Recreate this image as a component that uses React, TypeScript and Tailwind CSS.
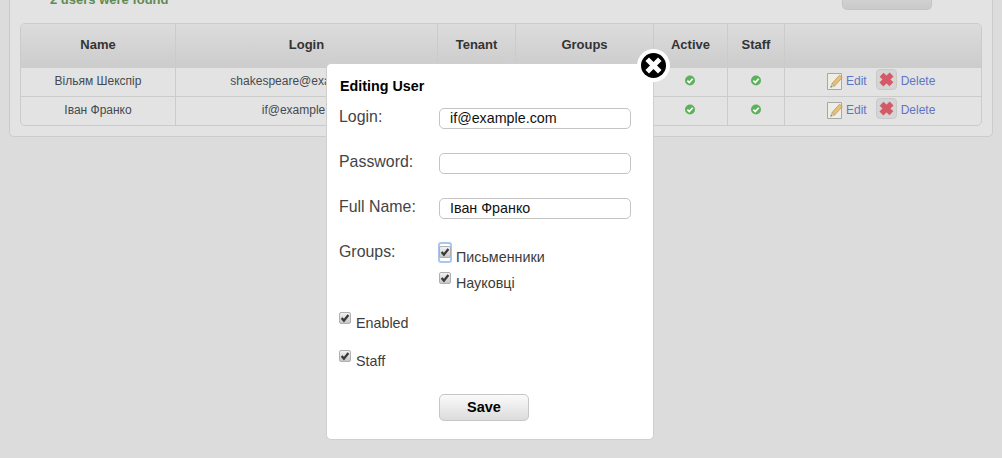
import React from "react";

const font = { fontFamily: '"Liberation Sans", Arial, sans-serif' };

function Check() {
  return (
    <span className="relative inline-flex h-[12px] w-[12px] shrink-0 items-center justify-center rounded-[2px] border border-[#b0b0b0] bg-gradient-to-b from-[#f2f2f2] to-[#c8c8c8]">
      <svg width="10" height="10" viewBox="0 0 10 10">
        <path d="M1.6 5 L3.9 7.6 L8.4 2" fill="none" stroke="#3a3a3a" strokeWidth="2.3" />
      </svg>
    </span>
  );
}

function Ok() {
  return (
    <svg width="11" height="11" viewBox="0 0 11 11" className="mx-auto -mt-[1px] block -translate-x-[0.5px]">
      <circle cx="5.5" cy="5.5" r="5" fill="#5cb25c" />
      <path d="M2.9 5.6 L4.8 7.5 L8.2 3.7" fill="none" stroke="#fff" strokeWidth="1.7" />
    </svg>
  );
}

function Pencil() {
  return (
    <svg width="16" height="17" viewBox="0 0 16 17" className="shrink-0">
      <path d="M.5.5H14.5V16.5H.5Z" fill="#eeeee6" stroke="#a8a8a0" />
      <path d="M5 10.5 L12.5 2.2 L15.3 4.6 L7.6 13 Z" fill="#e6c078" stroke="#b8914c" strokeWidth=".7" />
      <path d="M5 10.5 L7.6 13 L3.6 14.3 Z" fill="#d8cdb0" stroke="#8a8a80" strokeWidth=".4" />
      <path d="M3.4 14.6 L4.2 13 L5 14 Z" fill="#555" />
    </svg>
  );
}

function Cross() {
  return (
    <span className="inline-flex h-[21px] w-[21px] shrink-0 items-center justify-center rounded-[4px] border border-[#c9c9c9] bg-[#d5d5d5]">
      <svg width="17" height="17" viewBox="0 0 17 17">
        <path d="M3.6 3.8 L13.4 13.2 M13.6 3.4 L3.4 13.4" fill="none" stroke="#d45a68" strokeWidth="5.6" />
      </svg>
    </span>
  );
}

function Row({ name, login, last }: { name: string; login: string; last?: boolean }) {
  const c = `p-0 pb-[2px] text-center align-middle border-[#cbcbcb] ${last ? "h-[28px]" : "h-[29px] border-b"}`;
  return (
    <tr className="text-[12px] text-[#454a50]">
      <td className={`${c} border-r`}>{name}</td>
      <td className={`${c} border-r`}>{login}</td>
      <td className={`${c} border-r`}></td>
      <td className={`${c} border-r`}></td>
      <td className={`${c} border-r`}><Ok /></td>
      <td className={`${c} border-r`}><Ok /></td>
      <td className={c}>
        <div className="ml-[42px] flex items-center text-[#6373c4]">
          <Pencil />
          <span className="ml-[3px]">Edit</span>
          <span className="ml-[9px]"><Cross /></span>
          <span className="ml-[4px]">Delete</span>
        </div>
      </td>
    </tr>
  );
}

function Field({ label, value }: { label: string; value?: string }) {
  return (
    <div className="mb-[24px] flex h-[21px] items-start">
      <label className="w-[100px] text-[15.9px] leading-[18px] text-[#444]">{label}</label>
      <div className="flex h-[21px] w-[192px] items-center rounded-[5px] border border-[#c4c4c4] bg-white pl-[10px] text-[14.3px] text-[#111]">
        {value}
      </div>
    </div>
  );
}

function CheckLine({ label, focus }: { label: string; focus?: boolean }) {
  return (
    <div className="flex items-start text-[14.3px] leading-[16px] text-[#3c3c3c]">
      <span className="relative flex">
        {focus && <span className="absolute -left-[1px] -top-[4px] h-[21px] w-[14px] rounded-[3px] border-2 border-[#a9c5f2]"></span>}
        <Check />
      </span>
      <span className="ml-[5px] mt-[3px]">{label}</span>
    </div>
  );
}

export default function App() {
  const th = "h-[44px] border-r border-[#cbcbcb] p-0 pb-[3px] text-center align-middle font-bold text-[13px] text-[#333]";
  return (
    <div className="relative h-[458px] w-[1002px] overflow-hidden bg-[#dcdcdc]" style={font}>
      <div className="mx-[9px] -mt-[7px] h-[144px] rounded-b-[5px] border border-t-0 border-[#cbcbcb] bg-[#e3e3e3] px-[10px]">
        <div className="flex h-[30px] items-start justify-between pr-[50px]">
          <span className="ml-[30px] text-[13px] font-bold leading-[14px] text-[#5f8a52]">2 users were found</span>
          <span className="h-[17px] w-[90px] rounded-b-[5px] border border-t-0 border-[#c4c4c4] bg-gradient-to-b from-[#d8d8d8] to-[#c9c9c9]"></span>
        </div>
        <table className="w-[962px] table-fixed border-separate border-spacing-0 overflow-hidden rounded-[5px] border border-[#cbcbcb]">
          <colgroup>
            <col className="w-[155px]" />
            <col className="w-[262px]" />
            <col className="w-[78px]" />
            <col className="w-[138px]" />
            <col className="w-[74px]" />
            <col className="w-[57px]" />
            <col />
          </colgroup>
          <thead className="bg-gradient-to-b from-[#dcdcdc] to-[#cccccc]">
            <tr>
              <th className={th}>Name</th>
              <th className={th}>Login</th>
              <th className={th}>Tenant</th>
              <th className={th}>Groups</th>
              <th className={th}>Active</th>
              <th className={th}>Staff</th>
              <th className="h-[44px]"></th>
            </tr>
          </thead>
          <tbody>
            <Row name="Вільям Шекспір" login="shakespeare@example.com" />
            <Row name="Іван Франко" login="if@example.com" last />
          </tbody>
        </table>
      </div>

      <div className="absolute left-[326px] top-[63px] h-[377px] w-[328px] rounded-[5px] border border-[#cfcfcf] bg-white pl-[12px] pt-[14px]">
        <h2 className="mb-[14px] ml-[1px] text-[14.3px] font-bold leading-[16px] text-black">Editing User</h2>
        <Field label="Login:" value="if@example.com" />
        <Field label="Password:" />
        <Field label="Full Name:" value="Іван Франко" />
        <div className="flex items-start">
          <label className="w-[100px] text-[15.9px] leading-[18px] text-[#444]">Groups:</label>
          <div className="mt-[3px] flex flex-col gap-[7px]">
            <CheckLine label="Письменники" focus />
            <CheckLine label="Науковці" />
          </div>
        </div>
        <div className="mt-[21px] flex flex-col gap-[19px]">
          <CheckLine label="Enabled" />
          <CheckLine label="Staff" />
        </div>
        <button className="ml-[100px] mt-[25px] flex h-[27px] w-[90px] items-center justify-center rounded-[5px] border border-[#c6c6c6] bg-gradient-to-b from-[#fafafa] to-[#dcdcdc] text-[14.5px] font-bold text-black">
          Save
        </button>
      </div>

      <div className="absolute left-[637px] top-[49px] flex h-[33px] w-[33px] items-center justify-center rounded-full bg-white">
        <svg width="25" height="25" viewBox="0 0 25 25">
          <circle cx="12.5" cy="12.5" r="12.5" fill="#000" />
          <path d="M8 8 L17 17 M17 8 L8 17" stroke="#fff" strokeWidth="5" strokeLinecap="square" />
        </svg>
      </div>
    </div>
  );
}
